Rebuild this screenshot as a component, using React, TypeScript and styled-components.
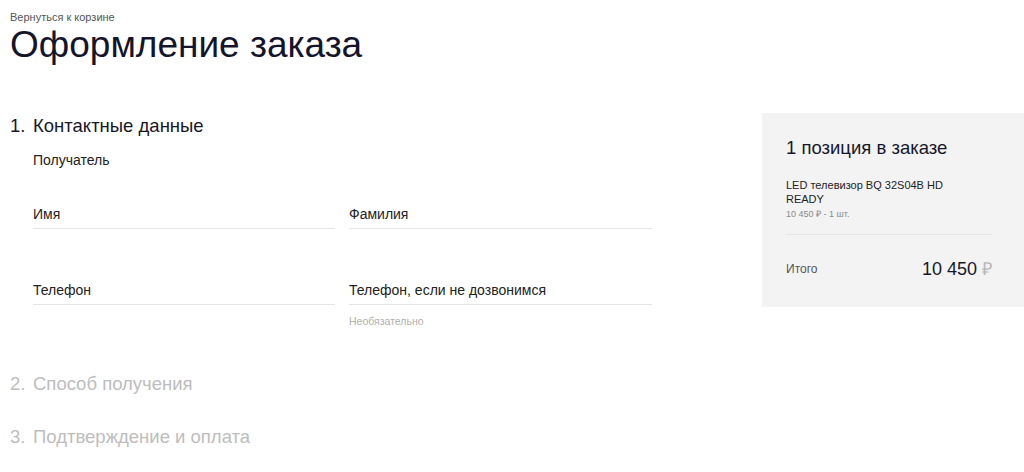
import { createGlobalStyle } from "styled-components";
import styled from "styled-components";

const GlobalStyle = createGlobalStyle`
  body {
    margin: 0;
    background: #ffffff;
    font-family: "Liberation Sans", Arial, sans-serif;
    color: #17172a;
  }
`;

const fields = [
  { label: "Имя" },
  { label: "Фамилия" },
  { label: "Телефон" },
  { label: "Телефон, если не дозвонимся", hint: "Необязательно" },
];

const App = () => {
  return (
    <Page>
      <GlobalStyle />
      <BackLink href="#">Вернуться к корзине</BackLink>
      <Title>Оформление заказа</Title>
      <Layout>
        <Main>
          <StepTitle>
            <StepNumber>1.</StepNumber>
            Контактные данные
          </StepTitle>
          <StepBody>
            <Subtitle>Получатель</Subtitle>
            <FieldsGrid>
              {fields.map((f) => (
                <Field key={f.label}>
                  <FieldLine>
                    <FieldLabel>{f.label}</FieldLabel>
                  </FieldLine>
                  {f.hint && <Hint>{f.hint}</Hint>}
                </Field>
              ))}
            </FieldsGrid>
          </StepBody>
          <StepTitle $inactive $spacing={44}>
            <StepNumber>2.</StepNumber>
            Способ получения
          </StepTitle>
          <StepTitle $inactive $spacing={27}>
            <StepNumber>3.</StepNumber>
            Подтверждение и оплата
          </StepTitle>
        </Main>
        <Summary>
          <SummaryTitle>1 позиция в заказе</SummaryTitle>
          <ItemName>LED телевизор BQ 32S04B HD READY</ItemName>
          <ItemPrice>10 450 ₽ - 1 шт.</ItemPrice>
          <Divider />
          <TotalRow>
            <TotalLabel>Итого</TotalLabel>
            <TotalValue>
              10 450 <Currency>₽</Currency>
            </TotalValue>
          </TotalRow>
        </Summary>
      </Layout>
    </Page>
  );
};

const Page = styled.div`
  padding: 11px 0 0 10px;
`;

const BackLink = styled.a`
  display: block;
  font-size: 11px;
  line-height: 12px;
  color: #555;
  text-decoration: none;
`;

const Title = styled.h1`
  margin: 0;
  font-size: 37px;
  line-height: 44px;
  font-weight: 400;
  color: #14142a;
`;

const Layout = styled.div`
  display: flex;
  margin-top: 46px;
  gap: 110px;
`;

const Main = styled.section`
  width: 642px;
  flex: none;
`;

const StepTitle = styled.h2<{ $inactive?: boolean; $spacing?: number }>`
  display: flex;
  margin: ${(p) => p.$spacing ?? 0}px 0 0;
  font-size: 18.5px;
  line-height: 26px;
  font-weight: 400;
  color: ${(p) => (p.$inactive ? "#bdbdbd" : "#17172a")};
`;

const StepNumber = styled.span`
  width: 23px;
  flex: none;
`;

const StepBody = styled.div`
  padding-left: 23px;
`;

const Subtitle = styled.div`
  margin-top: 13px;
  font-size: 14px;
  line-height: 16px;
  color: #222;
`;

const FieldsGrid = styled.div`
  display: grid;
  grid-template-columns: 302px 303px;
  column-gap: 14px;
  row-gap: 53px;
  margin-top: 38px;
  align-items: start;
`;

const Field = styled.div`
  display: flex;
  flex-direction: column;
`;

const FieldLine = styled.div`
  padding-bottom: 6px;
  border-bottom: 1px solid #e6e6e8;
`;

const FieldLabel = styled.span`
  display: block;
  font-size: 14px;
  line-height: 16px;
  color: #222;
`;

const Hint = styled.span`
  margin-top: 10px;
  font-size: 10.5px;
  line-height: 12px;
  color: #b0b0b0;
`;

const Summary = styled.aside`
  flex: 1;
  background: #f3f3f4;
  padding: 23px 32px 26px 24px;
  height: fit-content;
`;

const SummaryTitle = styled.h3`
  margin: 0;
  font-size: 18.5px;
  line-height: 24px;
  font-weight: 400;
  color: #17172a;
`;

const ItemName = styled.div`
  margin-top: 18px;
  width: 160px;
  font-size: 11px;
  line-height: 14px;
  color: #222;
`;

const ItemPrice = styled.div`
  margin-top: 3px;
  font-size: 9px;
  line-height: 11px;
  color: #8a8a8a;
`;

const Divider = styled.hr`
  margin: 14px 0 0;
  border: none;
  border-top: 1px solid #e6e6e8;
`;

const TotalRow = styled.div`
  display: flex;
  align-items: center;
  justify-content: space-between;
  margin-top: 22px;
`;

const TotalLabel = styled.span`
  font-size: 12px;
  color: #555;
`;

const TotalValue = styled.span`
  font-size: 18px;
  line-height: 24px;
  color: #17172a;
`;

const Currency = styled.span`
  color: #b8b8b8;
`;

export default App;
